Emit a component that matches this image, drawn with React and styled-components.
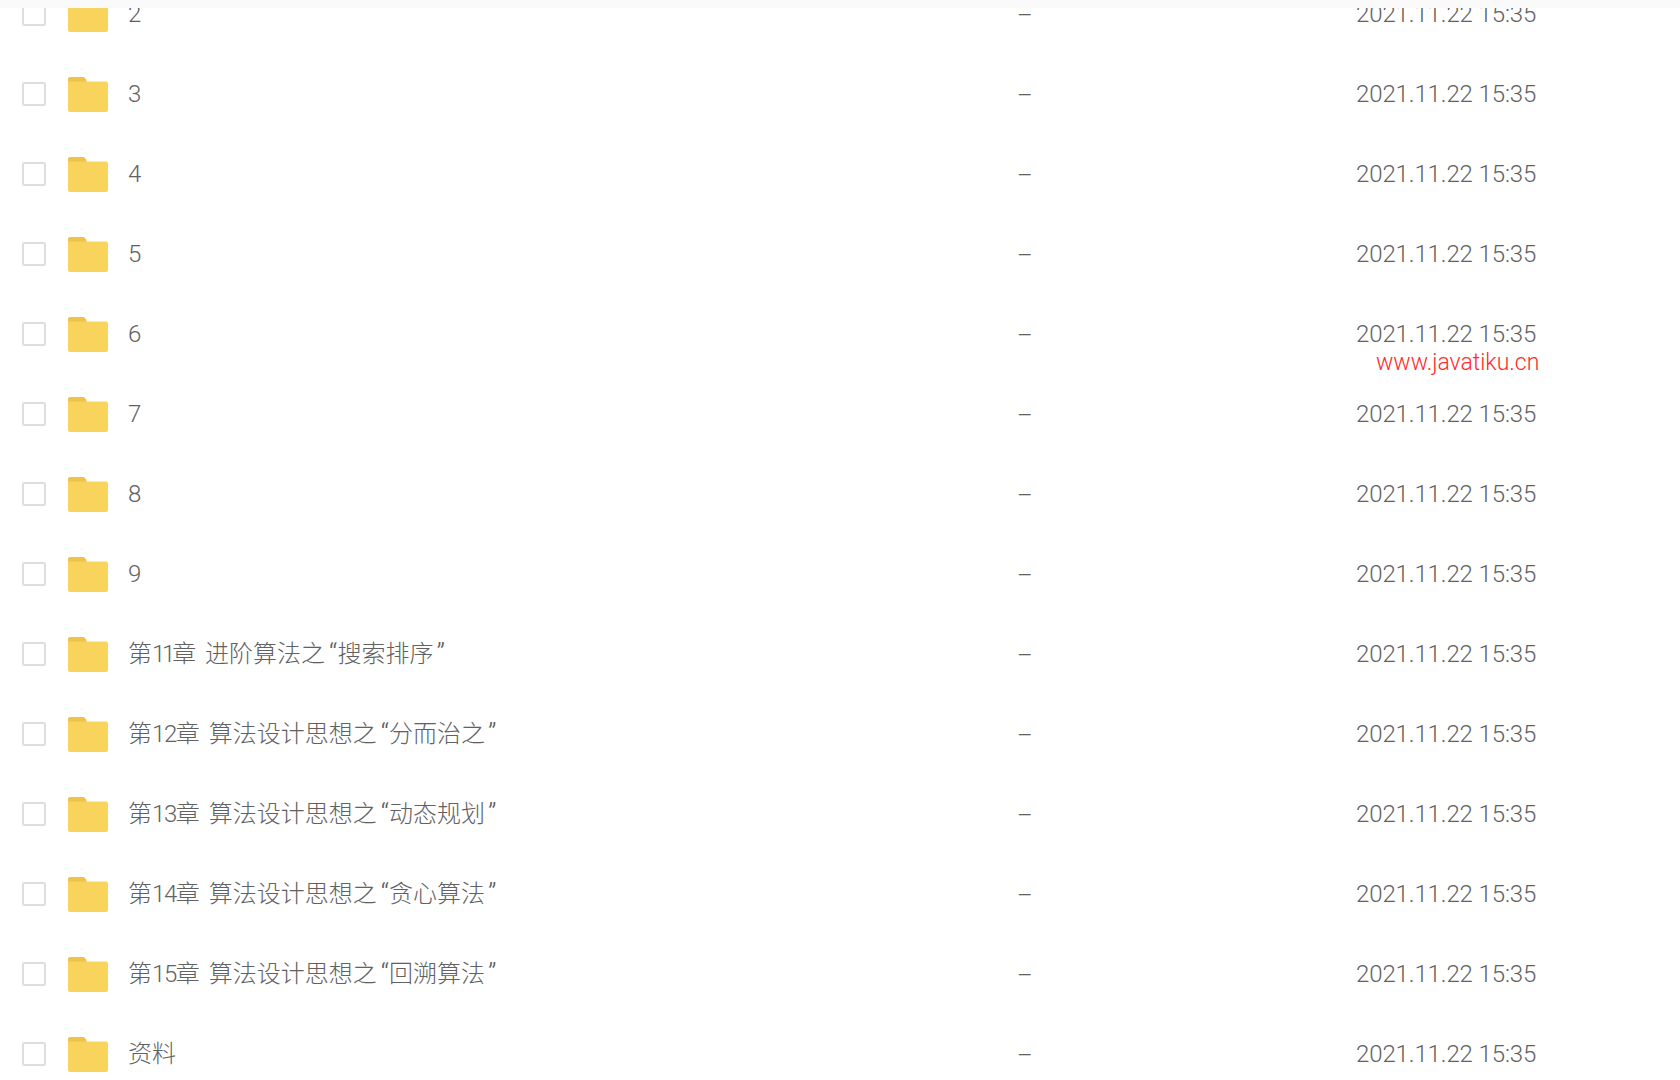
import React from "react";
import styled, { createGlobalStyle } from "styled-components";

const Global = createGlobalStyle`
  html, body { margin: 0; padding: 0; background: #fff; }
  body { overflow: hidden; }
`;

const Page = styled.div`
  position: relative;
  width: 1680px;
  height: 1080px;
  overflow: hidden;
  background: #fff;
  color: #616161;
  font-family: Roboto, "Noto Sans CJK SC", sans-serif;
  font-weight: 300;
  font-size: 24px;
`;

const TopEdge = styled.div`
  position: absolute;
  inset: 0 0 auto 0;
  height: 8px;
  background: #fafafa;
  z-index: 2;
`;

const List = styled.div`
  display: flex;
  flex-direction: column;
  margin-top: -26px;
`;

const Row = styled.div`
  position: relative;
  flex: 0 0 80px;
  display: grid;
  grid-template-columns: 24px 82px 889px 339px 1fr;
  align-items: center;
  padding-left: 22px;
`;

const Check = styled.span`
  box-sizing: border-box;
  width: 24px;
  height: 24px;
  border: 2px solid #dedede;
  border-radius: 2px;
  background: #fff;
`;

const FolderBox = styled.svg`
  display: block;
  width: 40px;
  height: 35px;
  margin-left: 22px;
`;

const Name = styled.span`
  white-space: nowrap;
  line-height: 32px;
`;

const Num = styled.span`
  letter-spacing: ${(p) => (p.$narrow ? "-3.2px" : "-1.4px")};
`;

const Lead = styled.span`
  margin-left: 3px;
`;

const OpenQuote = styled.span`
  margin-left: 4px;
  font-size: 28px;
  line-height: 0;
  vertical-align: -1px;
`;

const CloseQuote = styled.span`
  margin-left: 3px;
  font-size: 28px;
  line-height: 0;
  vertical-align: -1px;
`;

const Size = styled.span`
  line-height: 32px;
  transform: translateY(1px);
`;

const DateText = styled.span`
  white-space: nowrap;
  letter-spacing: -0.12px;
  line-height: 32px;
`;

const Watermark = styled.span`
  position: absolute;
  left: 1376px;
  top: 56px;
  font-size: 23px;
  line-height: 26px;
  color: #ff2a2a;
  white-space: nowrap;
`;

const Folder = () => (
  <FolderBox viewBox="0 0 40 35">
    <path d="M0 2a2 2 0 0 1 2-2h13a3 3 0 0 1 2.6 1.5L19 5H0z" fill="#f0c348" />
    <path d="M0 4.5h38a2 2 0 0 1 2 2V33a2 2 0 0 1-2 2H2a2 2 0 0 1-2-2z" fill="#f9d45d" />
  </FolderBox>
);

const Chapter = ({ num, lead, quoted }) => (
  <>
    第<Num $narrow={num === "11"}>{num}</Num>章 <Lead>{lead}</Lead>
    <OpenQuote>“</OpenQuote>
    {quoted}
    <CloseQuote>”</CloseQuote>
  </>
);

const rows = [
  { id: "2", name: "2" },
  { id: "3", name: "3" },
  { id: "4", name: "4" },
  { id: "5", name: "5" },
  { id: "6", name: "6", mark: true },
  { id: "7", name: "7" },
  { id: "8", name: "8" },
  { id: "9", name: "9" },
  { id: "11", name: <Chapter num="11" lead="进阶算法之" quoted="搜索排序" /> },
  { id: "12", name: <Chapter num="12" lead="算法设计思想之" quoted="分而治之" /> },
  { id: "13", name: <Chapter num="13" lead="算法设计思想之" quoted="动态规划" /> },
  { id: "14", name: <Chapter num="14" lead="算法设计思想之" quoted="贪心算法" /> },
  { id: "15", name: <Chapter num="15" lead="算法设计思想之" quoted="回溯算法" /> },
  { id: "z", name: "资料" },
];

export default function App() {
  return (
    <Page>
      <Global />
      <TopEdge />
      <List>
        {rows.map((r) => (
          <Row key={r.id}>
            <Check />
            <Folder />
            <Name>{r.name}</Name>
            <Size>–</Size>
            <DateText>2021.11.22 15:35</DateText>
            {r.mark && <Watermark>www.javatiku.cn</Watermark>}
          </Row>
        ))}
      </List>
    </Page>
  );
}
